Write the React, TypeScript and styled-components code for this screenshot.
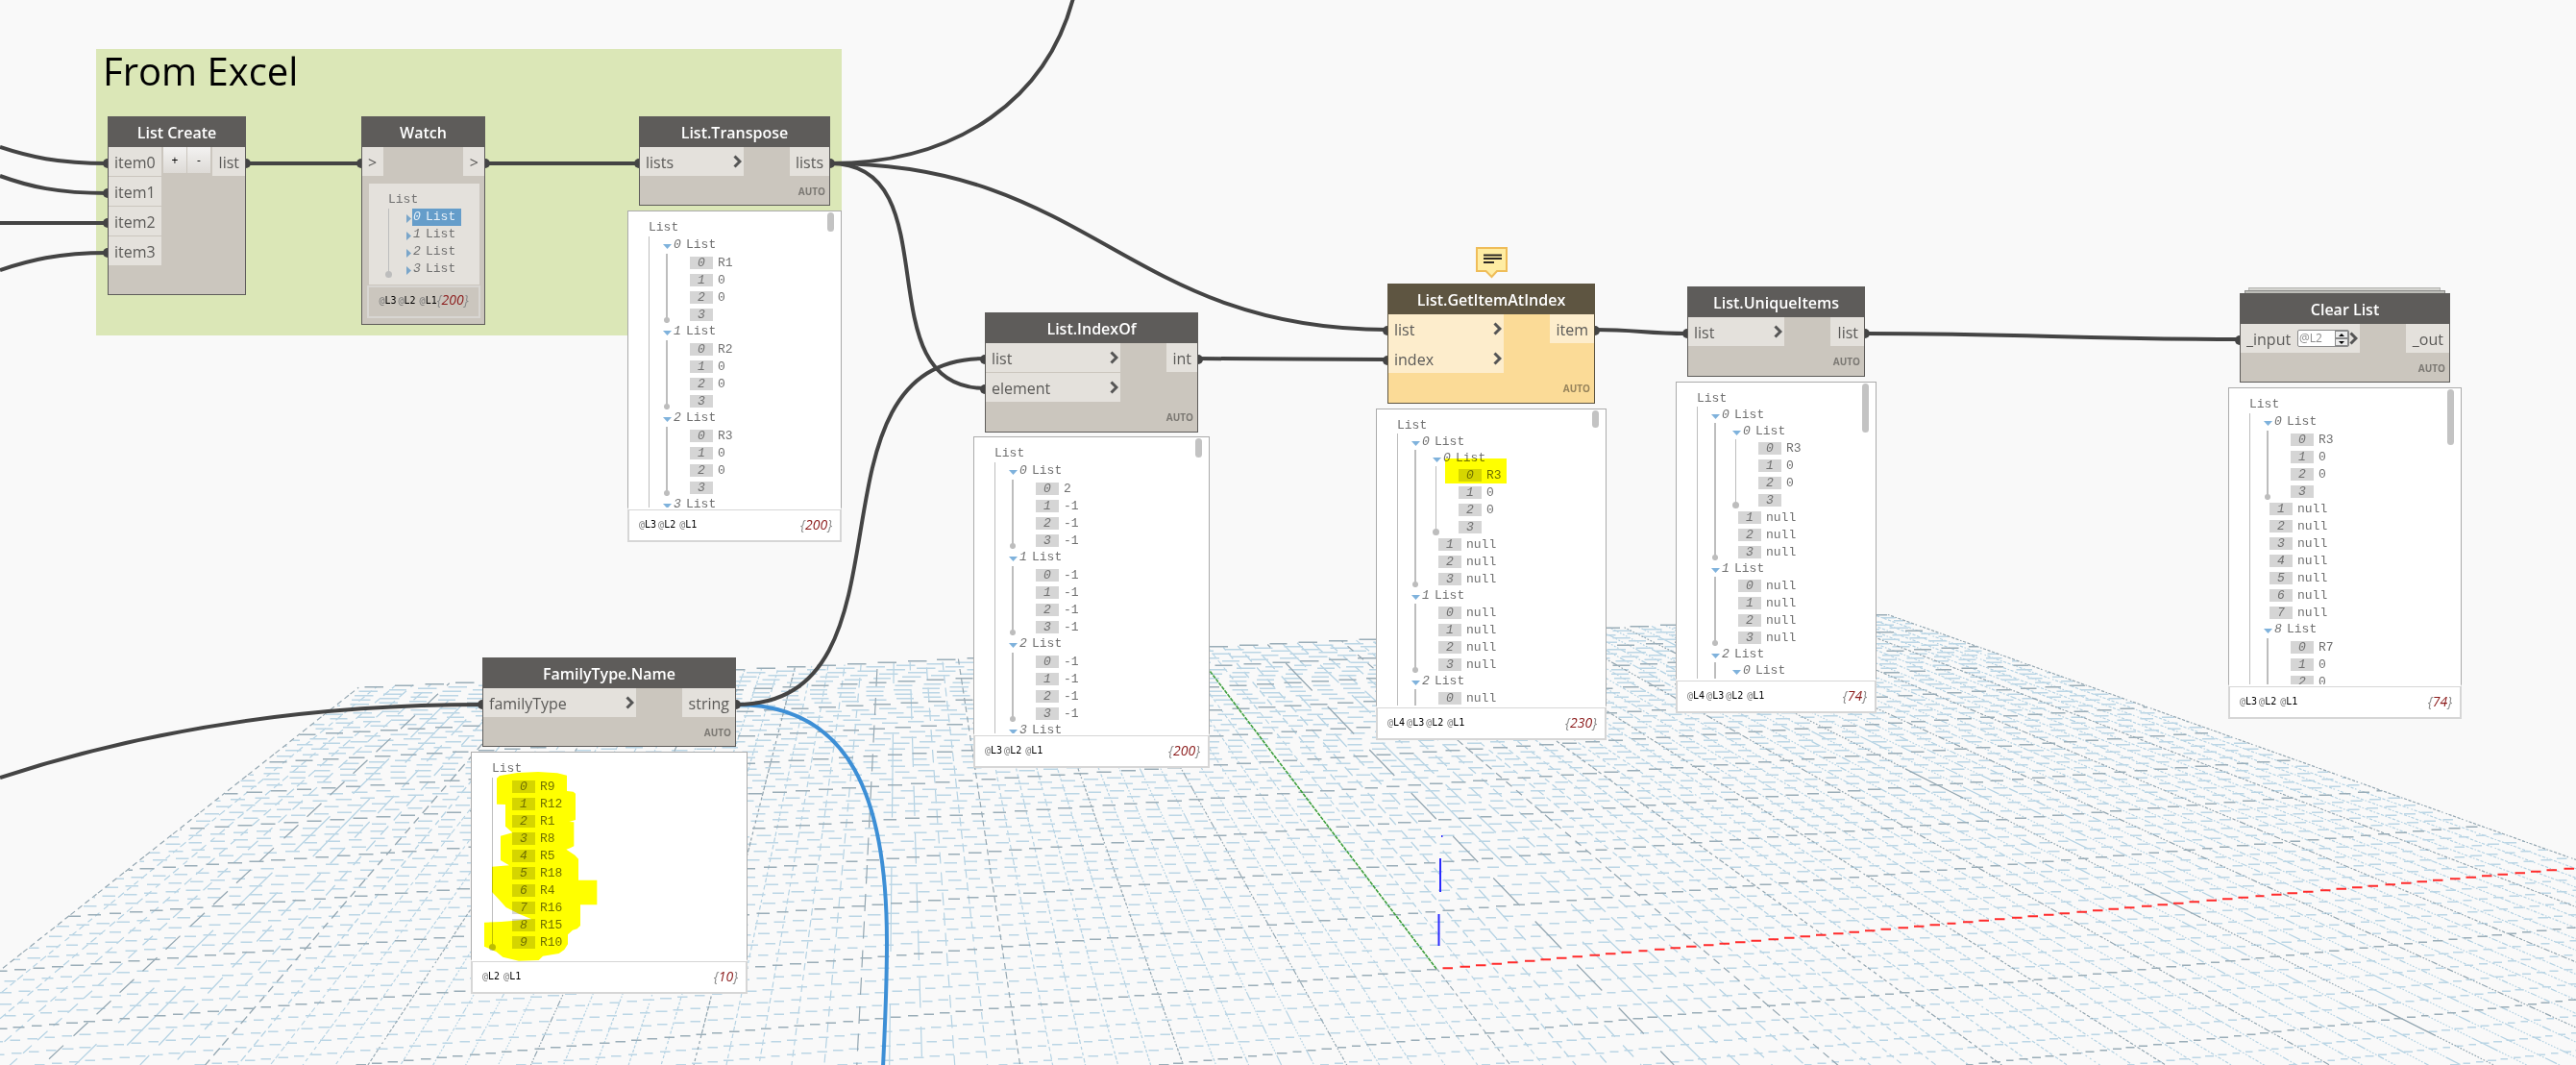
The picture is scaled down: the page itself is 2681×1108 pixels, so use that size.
import React from "react";
import styled, { createGlobalStyle, css } from "styled-components";

const GlobalStyle = createGlobalStyle`
  * { box-sizing: border-box; }
  html, body { margin: 0; background: #f9f9f9; }
  body { font-family: "Open Sans", "Noto Sans", sans-serif; }
  button, input { font: inherit; margin: 0; }
  ul { list-style: none; margin: 0; padding: 0; }
`;

/* ---------- background grid ---------- */

const PX = 1.5;
const VISIBLE = 0.62;

// Perspective projection of the ground plane on the viewport.
function project(x: number, y: number): [number, number] {
  const w = 1 + 0.0166 * x + 0.0833 * y;
  return [(165.2 * x + 77.86 * y + 1495.6) / w, (4.27 * x + 22.7 * y + 1008) / w];
}

const frac = (v: number) => v - Math.floor(v);

// Rasterises a line on a coarse pixel grid, dropping the pixels that fall
// between two rows or columns, which gives the dashes of a hairline.
function hairline(ax: number, ay: number, bx: number, by: number): string {
  const out: string[] = [];
  const dx = bx - ax;
  const dy = by - ay;
  const xMajor = Math.abs(dx) >= Math.abs(dy);
  const [s, e] = xMajor
    ? [Math.max(0, Math.min(ax, bx)), Math.min(2681, Math.max(ax, bx))]
    : [Math.max(0, Math.min(ay, by)), Math.min(1108, Math.max(ay, by))];
  const at = (m: number) =>
    xMajor ? ay + ((m - ax) * dy) / dx : ax + ((m - ay) * dx) / dy;
  const flat = xMajor && Math.abs(dy / dx) < 0.2;
  let start: number | null = null;
  let row = 0;
  const flush = (end: number) => {
    if (start === null) return;
    if (flat) {
      const y = (row * PX + 0.7).toFixed(1);
      out.push(`M${start.toFixed(1)} ${y}H${end.toFixed(1)}`);
    } else {
      const a = at(start);
      const b = at(end);
      out.push(
        xMajor
          ? `M${start.toFixed(1)} ${a.toFixed(1)}L${end.toFixed(1)} ${b.toFixed(1)}`
          : `M${a.toFixed(1)} ${start.toFixed(1)}L${b.toFixed(1)} ${end.toFixed(1)}`
      );
    }
    start = null;
  };
  for (let k = Math.ceil(s / PX); k * PX < e; k++) {
    const m = k * PX;
    const v = at(m + PX / 2) / PX;
    if (frac(v) < VISIBLE) {
      if (start !== null && flat && Math.floor(v) !== row) flush(m);
      if (start === null) {
        start = m;
        row = Math.floor(v);
      }
    } else flush(m);
  }
  flush(e);
  return out.join("");
}

const join = (x0: number, y0: number, x1: number, y1: number) => {
  const [ax, ay] = project(x0, y0);
  const [bx, by] = project(x1, y1);
  return hairline(ax, ay, bx, by);
};

const steps = Array.from({ length: 101 }, (_, i) => i - 50);
const rowsOf = (major: boolean) =>
  steps
    .filter((i) => (i % 5 === 0) === major && i >= -25)
    .map((i) => (i === 0 ? join(-10, 0, 0, 0) : join(-10, i / 5, 10, i / 5)))
    .join("");
const columnsOf = (major: boolean) =>
  steps
    .filter((i) => (i % 5 === 0) === major)
    .map((i) => (i === 0 ? join(0, 0, 0, -5) : join(i / 5, 10, i / 5, -5)))
    .join("");

const [backX, backY] = project(0, 10);

const paths = {
  minorColumns: columnsOf(false),
  minorRows: rowsOf(false),
  majorColumns: columnsOf(true),
  majorRows: rowsOf(true),
  xAxis: join(0.03, 0, 10, 0),
  yAxis: `M1495 1008L${backX.toFixed(1)} ${backY.toFixed(1)}`,
};

const Layer = styled.svg`
  position: absolute;
  inset: 0;
  width: 100%;
  height: 100%;
  overflow: visible;
  pointer-events: none;
`;

const Grid = React.memo(() => (
  <Layer aria-hidden="true" fill="none">
    <path d={paths.minorColumns} stroke="#b4d2e3" strokeWidth="1.2" />
    <path d={paths.minorRows} stroke="#bbd6e5" strokeWidth="1.6" />
    <path d={paths.majorColumns} stroke="#93a6b1" strokeWidth="1.2" />
    <path d={paths.majorRows} stroke="#9aadb8" strokeWidth="1.6" />
    <path d={paths.yAxis} stroke="#3d9f3d" strokeWidth="1.6" strokeDasharray="4 1" />
    <path d={paths.xAxis} stroke="#ff2a2a" strokeWidth="2" />
    <path d="M1499 893V928M1497.500 951V984M1500 870h1.500" stroke="#2a2aff" strokeWidth="2" />
  </Layer>
));

/* ---------- wires ---------- */

const link = (x0: number, y0: number, x1: number, y1: number) => {
  const o = Math.round(Math.hypot(x1 - x0, y1 - y0) * 0.45);
  return `M${x0} ${y0}C${x0 + o} ${y0} ${x1 - o} ${y1} ${x1} ${y1}`;
};

const wires = [
  "M0 153C30 163 60 170 112 170",
  "M0 183C30 194 60 201 112 201",
  "M0 232H112",
  "M0 281C30 271 60 263 112 263",
  link(256, 170, 376, 170),
  link(505, 170, 665, 170),
  "M864 170C1000 170 1090 100 1117 -2",
  link(864, 170, 1444, 343),
  link(864, 170, 1025, 404),
  link(766, 733, 1025, 373),
  "M0 809C150 760 320 733 502 733",
  link(1247, 373, 1444, 374),
  link(1660, 343, 1756, 347),
  link(1941, 347, 2331, 353),
];

const Wires = () => (
  <Layer aria-hidden="true" fill="none" strokeWidth="4">
    <path d="M766 733C885 733 923 830 923 980C923 1030 921 1070 919 1110" stroke="#3d8fd6" />
    {wires.map((d) => (
      <path key={d} d={d} stroke="#444" />
    ))}
  </Layer>
);

/* ---------- workspace ---------- */

const Workspace = styled.main`
  position: relative;
  min-height: 100vh;
  overflow: hidden;
  background: #f9f9f9;
`;

const Group = styled.section`
  position: absolute;
  left: 100px;
  top: 51px;
  width: 776px;
  height: 298px;
  padding: 0 7px;
  background: #dbe7b7;
`;

const GroupTitle = styled.h1`
  margin: 0;
  font-size: 40px;
  line-height: 46px;
  font-weight: 400;
  color: #000;
`;

type Tone = "plain" | "warning";
const tones = {
  plain: { head: "#5e5c5a", body: "#cbc6be", port: "#e4e1dc", auto: "#7b7873" },
  warning: { head: "#5e5541", body: "#fbdb97", port: "#fdedcc", auto: "#96835b" },
};

const Card = styled.article<{ $x: number; $y: number; $w: number; $tone: Tone }>`
  position: absolute;
  left: ${(p) => p.$x}px;
  top: ${(p) => p.$y}px;
  width: ${(p) => p.$w}px;
  border: 1px solid ${(p) => tones[p.$tone].head};
  background: ${(p) => tones[p.$tone].body};
  --port: ${(p) => tones[p.$tone].port};
  --head: ${(p) => tones[p.$tone].head};
  --auto: ${(p) => tones[p.$tone].auto};
`;

const CardTitle = styled.h2`
  margin: 0;
  height: 31px;
  background: var(--head);
  color: #fff;
  font-size: 16px;
  line-height: 32px;
  font-weight: 600;
  text-align: center;
  white-space: nowrap;
`;

const Ports = styled.div`
  display: flex;
  align-items: flex-start;
`;

const Inputs = styled.div<{ $w: number; $joined?: boolean }>`
  display: flex;
  flex-direction: column;
  gap: 1px;
  width: ${(p) => p.$w}px;
  background: ${(p) => (p.$joined ? "var(--port)" : "transparent")};
`;

const portBase = css<{ $free?: boolean }>`
  position: relative;
  display: flex;
  align-items: center;
  height: 30px;
  background: var(--port);
  color: #5a5957;
  font-size: 16px;
  line-height: 30px;
  white-space: nowrap;
  &::before {
    content: "";
    display: ${(p) => (p.$free ? "none" : "block")};
    position: absolute;
    top: 12px;
    width: 5px;
    height: 10px;
    background: #444;
  }
`;

const InPort = styled.div`
  ${portBase}
  justify-content: space-between;
  padding: 0 2px 0 6px;
  &::before {
    left: -6px;
    border-radius: 5px 0 0 5px;
  }
`;

const PortName = styled.span`
  padding-top: 2px;
`;

const OutPort = styled.div<{ $w: number }>`
  ${portBase}
  justify-content: flex-end;
  width: ${(p) => p.$w}px;
  margin-left: auto;
  padding-right: 6px;
  &::before {
    right: -6px;
    border-radius: 0 5px 5px 0;
  }
`;

const Auto = styled.div<{ $h: number }>`
  height: ${(p) => p.$h}px;
  padding-right: 4px;
  color: var(--auto);
  font-size: 10px;
  line-height: 32px;
  font-weight: 700;
  text-align: right;
`;

const Chevron = () => (
  <svg width="9" height="14" viewBox="0 0 9 14" fill="none" aria-hidden="true">
    <path d="M1.500 1.500L7 7L1.500 12.500" stroke="#555" strokeWidth="3" />
  </svg>
);

/* ---------- list create buttons ---------- */

const PortButtons = styled.div`
  display: flex;
  gap: 1px;
  margin-left: 2px;
`;

const PortButton = styled.button`
  width: 24px;
  height: 27px;
  padding: 0;
  border: 0;
  background: linear-gradient(#f3f2f1, #dddad6);
  color: #000;
  font-size: 12px;
  line-height: 24px;
`;

/* ---------- level spinner ---------- */

const Spinner = styled.div`
  display: flex;
  width: 54px;
  height: 18px;
  margin-left: auto;
  border: 1px solid #8a8a8a;
  border-radius: 2px;
  background: #fff;
`;

const LevelInput = styled.input`
  flex: 1;
  min-width: 0;
  padding: 0 1px;
  border: 0;
  background: transparent;
  color: #8b8b8b;
  font-size: 12px;
  line-height: 16px;
`;

const SpinColumn = styled.div`
  display: flex;
  flex-direction: column;
  width: 14px;
`;

const SpinButton = styled.button`
  display: flex;
  flex: 1;
  align-items: center;
  justify-content: center;
  padding: 0;
  border: 1px solid #8a8a8a;
  background: #ececec;
`;

const Caret = ({ up }: { up?: boolean }) => (
  <svg width="6" height="3" viewBox="0 0 6 3" aria-hidden="true">
    <path d={up ? "M0 3L3 0L6 3Z" : "M0 0L3 3L6 0Z"} fill="#000" />
  </svg>
);

/* ---------- data tree ---------- */

type TreeItem = {
  i?: number; v?: string; items?: TreeItem[]; closed?: boolean; selected?: boolean; more?: boolean;
};

const leaves = (...values: string[]): TreeItem[] => values.map((v, i) => ({ i, v }));
const list = (i: number, items: TreeItem[], more = false): TreeItem => ({ i, items, more });
const nulls = (from: number, to: number): TreeItem[] =>
  Array.from({ length: to - from + 1 }, (_, k) => ({ i: from + k, v: "null" }));

const Tree = styled.div<{ $list: number }>`
  --list: ${(p) => p.$list}px;
  --leaf: 18px;
  font-family: "Liberation Mono", monospace;
  font-size: 13px;
  color: #707070;
`;

const RootLabel = styled.div`
  height: var(--list);
  line-height: var(--list);
`;

const Branch = styled.ul<{ $depth: number; $more?: boolean }>`
  position: relative;
  margin-left: ${(p) => (p.$depth === 0 ? 0 : 3)}px;
  padding-left: ${(p) => (p.$depth === 0 ? 14 : 17)}px;
  padding-bottom: ${(p) => (p.$more ? 24 : 0)}px;
  border-left: ${(p) => (p.$depth === 1 ? 2 : 1)}px solid #bdbdbd;
  &::after {
    content: "";
    display: ${(p) => (p.$more ? "none" : "block")};
    position: absolute;
    left: -4px;
    bottom: 0;
    width: ${(p) => (p.$depth === 1 ? 6 : 7)}px;
    height: ${(p) => (p.$depth === 1 ? 6 : 7)}px;
    border-radius: 50%;
    background: #bdbdbd;
  }
`;

const ListRow = styled.div`
  display: flex;
  align-items: center;
  height: var(--list);
  line-height: var(--list);
`;

const Toggle = styled.button`
  display: flex;
  justify-content: flex-end;
  width: 10px;
  padding: 3px 1px 0 0;
  border: 0;
  background: none;
`;

const ListLabel = styled.span<{ $selected?: boolean }>`
  display: flex;
  gap: 5px;
  padding: 0 6px 0 1px;
  i { width: 8px; }
  ${(p) =>
    p.$selected &&
    css`
      background: #659dca;
      color: #e9f1f8;
    `}
`;

const LeafRow = styled.div`
  display: flex;
  align-items: center;
  gap: 5px;
  height: var(--leaf);
  padding-left: 6px;
`;

const Index = styled.i`
  width: 24px;
  height: 13px;
  background: #d5d5d5;
  line-height: 14px;
  text-align: center;
`;

const Arrow = ({ closed }: { closed?: boolean }) =>
  closed ? (
    <svg width="5" height="9" viewBox="0 0 5 9" aria-hidden="true">
      <path d="M0 0L5 4.500L0 9Z" fill="#7aa6ca" />
    </svg>
  ) : (
    <svg width="9" height="5" viewBox="0 0 9 5" aria-hidden="true">
      <path d="M0 0H9L4.500 5Z" fill="#7fb2dc" />
    </svg>
  );

const Items = ({ items, depth, more }: { items: TreeItem[]; depth: number; more?: boolean }) => (
  <Branch $depth={depth} $more={more}>
    {items.map((it, k) => (
      <li key={k}>
        {it.items || it.closed ? (
          <>
            <ListRow>
              <Toggle type="button" aria-label={it.closed ? "Expand" : "Collapse"}>
                <Arrow closed={it.closed} />
              </Toggle>
              <ListLabel $selected={it.selected}>
                <i>{it.i}</i>
                <span>List</span>
              </ListLabel>
            </ListRow>
            {it.items && <Items items={it.items} depth={depth + 1} more={it.more} />}
          </>
        ) : (
          <LeafRow>
            <Index>{it.i}</Index>
            <span>{it.v}</span>
          </LeafRow>
        )}
      </li>
    ))}
  </Branch>
);

const DataTree = ({ items, row = 18, more }: { items: TreeItem[]; row?: number; more?: boolean }) => (
  <Tree $list={row}>
    <RootLabel>List</RootLabel>
    <Items items={items} depth={0} more={more} />
  </Tree>
);

/* ---------- preview bubble ---------- */

const Bubble = styled.section<{ $x: number; $y: number; $w: number }>`
  position: absolute;
  left: ${(p) => p.$x}px;
  top: ${(p) => p.$y}px;
  width: ${(p) => p.$w}px;
  background: #fff;
`;

const Viewport = styled.div<{ $h: number }>`
  position: relative;
  height: ${(p) => p.$h}px;
  padding: 8px 0 0 21px;
  border: 1px solid #ababab;
  border-bottom: 2px solid #fff;
  overflow: hidden;
`;

const Thumb = styled.div<{ $h: number }>`
  position: absolute;
  top: 1px;
  right: 7px;
  width: 7px;
  height: ${(p) => p.$h}px;
  border-radius: 4px;
  background: #c3c3c3;
`;

const Levels = styled.footer`
  display: flex;
  align-items: center;
  justify-content: space-between;
  height: 34px;
  padding: 0 8px 2px 10px;
  border: 2px solid #d6d6d6;
  border-top-width: 1px;
`;

const LevelList = styled.span`
  display: flex;
  gap: 2px;
  color: #000;
  font-family: "DejaVu Sans Mono", monospace;
  font-size: 10px;
  span:last-child:not(:first-child) { margin-left: 2px; }
  b { font-weight: 400; color: #777; }
`;

const Count = styled.em`
  color: #8b1a1a;
  font-size: 14px;
  line-height: 20px;
  b { font-weight: 400; color: #888; }
`;

const LevelNames = ({ n }: { n: number }) => (
  <LevelList>
    {Array.from({ length: n }, (_, k) => (
      <span key={k}>
        <b>@</b>L{n - k}
      </span>
    ))}
  </LevelList>
);

const Total = ({ n }: { n: number }) => (
  <Count>
    <b>{"{"}</b>
    {n}
    <b>{"}"}</b>
  </Count>
);

type PreviewProps = {
  x: number; y: number; w: number; h: number; thumb?: number;
  levels: number; count: number; items: TreeItem[]; row?: number;
};

const Preview = ({ x, y, w, h, thumb, levels, count, items, row }: PreviewProps) => (
  <Bubble $x={x} $y={y} $w={w}>
    <Viewport $h={h}>
      <DataTree items={items} row={row} more={thumb !== undefined} />
      {thumb && <Thumb $h={thumb} />}
    </Viewport>
    <Levels>
      <LevelNames n={levels} />
      <Total n={count} />
    </Levels>
  </Bubble>
);

/* ---------- nodes ---------- */

type NodeProps = {
  x: number; y: number; w: number; title: string; inputs: string[]; inW: number;
  out: string; outW: number; tone?: Tone; joined?: boolean; foot?: number; spinner?: boolean; free?: boolean;
};

const FunctionNode = ({
  x, y, w, title, inputs, inW, out, outW, tone = "plain", joined, foot = 30, spinner, free,
}: NodeProps) => (
  <Card $x={x} $y={y} $w={w} $tone={tone}>
    <CardTitle>{title}</CardTitle>
    <Ports>
      <Inputs $w={inW} $joined={joined}>
        {inputs.map((name) => (
          <InPort key={name}>
            <PortName>{name}</PortName>
            {spinner && (
              <Spinner>
                <LevelInput defaultValue="@L2" aria-label="List level" />
                <SpinColumn>
                  <SpinButton type="button" aria-label="Level up"><Caret up /></SpinButton>
                  <SpinButton type="button" aria-label="Level down"><Caret /></SpinButton>
                </SpinColumn>
              </Spinner>
            )}
            <Chevron />
          </InPort>
        ))}
      </Inputs>
      <OutPort $w={outW} $free={free}>
        <PortName>{out}</PortName>
      </OutPort>
    </Ports>
    <Auto $h={foot}>AUTO</Auto>
  </Card>
);

const CreateFoot = styled.div`
  height: 30px;
`;

const WatchPanel = styled.div`
  height: 105px;
  margin: 8px 5px 0 7px;
  padding: 8px 0 0 20px;
  background: #e4e1dc;
`;

const WatchFoot = styled.div`
  display: flex;
  align-items: center;
  justify-content: center;
  height: 34px;
  margin: 1px 4px 6px 5px;
  padding-bottom: 4px;
  border: 2px solid #d8d6d2;
`;

const StackBack = styled.div`
  position: absolute;
  left: 2340px;
  top: 299px;
  width: 200px;
  height: 8px;
  border: 1px solid #b5b5b2;
  background: #d4d4d0;
`;

const StackMiddle = styled(StackBack)`
  left: 2336px;
  top: 302px;
  width: 209px;
  border-color: #8b8b88;
  background: #bdbdb8;
`;

const Note = styled.svg`
  position: absolute;
  left: 1536px;
  top: 257px;
`;

const HighlightBox = styled.div`
  position: absolute;
  left: 1504px;
  top: 477px;
  width: 64px;
  height: 26px;
  background: #ff0;
  mix-blend-mode: multiply;
`;

const HighlightStroke = styled.svg`
  position: absolute;
  left: 504px;
  top: 803px;
  mix-blend-mode: multiply;
`;

const minusOnes = () => leaves("-1", "-1", "-1", "-1");

export default function App() {
  return (
    <>
      <GlobalStyle />
      <Workspace>
        <Grid />
        <Group>
          <GroupTitle>From Excel</GroupTitle>
        </Group>
        <Wires />

        <Card $x={112} $y={121} $w={144} $tone="plain">
          <CardTitle>List Create</CardTitle>
          <Ports>
            <Inputs $w={55}>
              {["item0", "item1", "item2", "item3"].map((n) => (
                <InPort key={n}>
                  <PortName>{n}</PortName>
                </InPort>
              ))}
            </Inputs>
            <PortButtons>
              <PortButton type="button">+</PortButton>
              <PortButton type="button">-</PortButton>
            </PortButtons>
            <OutPort $w={34}>
              <PortName>list</PortName>
            </OutPort>
          </Ports>
          <CreateFoot />
        </Card>

        <Card $x={376} $y={121} $w={129} $tone="plain">
          <CardTitle>Watch</CardTitle>
          <Ports>
            <Inputs $w={22}>
              <InPort>
                <PortName>&gt;</PortName>
              </InPort>
            </Inputs>
            <OutPort $w={22}>
              <PortName>&gt;</PortName>
            </OutPort>
          </Ports>
          <WatchPanel>
            <DataTree
              items={[0, 1, 2, 3].map((i) => ({ i, closed: true, selected: i === 0 }))}
            />
          </WatchPanel>
          <WatchFoot>
            <LevelNames n={3} />
            <Total n={200} />
          </WatchFoot>
        </Card>

        <FunctionNode x={665} y={121} w={199} title="List.Transpose" inputs={["lists"]} inW={108} out="lists" outW={41} />
        <Preview
          x={653} y={219} w={223} h={311} thumb={20} levels={3} count={200}
          items={[...["R1", "R2", "R3"].map((r, i) => list(i, leaves(r, "0", "0", ""))), list(3, [], true)]}
        />

        <FunctionNode x={1025} y={325} w={222} title="List.IndexOf" inputs={["list", "element"]} inW={140} out="int" outW={32} foot={31} />
        <Preview
          x={1013} y={454} w={246} h={311} thumb={20} levels={3} count={200}
          items={[
            list(0, leaves("2", "-1", "-1", "-1")),
            list(1, minusOnes()),
            list(2, minusOnes()),
            list(3, [], true),
          ]}
        />

        <FunctionNode
          x={1444} y={295} w={216} title="List.GetItemAtIndex" tone="warning" joined
          inputs={["list", "index"]} inW={120} out="item" outW={46} foot={31}
        />
        <Preview
          x={1432} y={425} w={240} h={311} thumb={18} levels={4} count={230} row={17}
          items={[
            list(0, [list(0, leaves("R3", "0", "0", "")), ...nulls(1, 3)]),
            list(1, nulls(0, 3)),
            list(2, nulls(0, 0), true),
          ]}
        />
        <Note width="33" height="33" viewBox="0 0 33 33" role="img" aria-label="Warning note">
          <path d="M1 1H32V25H22L16.500 31L10.500 25H1Z" fill="#ffeda3" stroke="#efbd59" strokeWidth="2" />
          <path d="M8 8.500H27M8 12H27M8 16H19" stroke="#2c2823" strokeWidth="2" />
        </Note>

        <FunctionNode x={1756} y={298} w={185} title="List.UniqueItems" inputs={["list"]} inW={100} out="list" outW={35} foot={31} />
        <Preview
          x={1744} y={397} w={209} h={311} thumb={51} levels={4} count={74} row={17}
          items={[
            list(0, [list(0, leaves("R3", "0", "0", "")), ...nulls(1, 3)]),
            list(1, nulls(0, 3)),
            list(2, [list(0, [], true)], true),
          ]}
        />

        <StackBack />
        <StackMiddle />
        <FunctionNode x={2331} y={305} w={219} title="Clear List" inputs={["_input"]} inW={124} out="_out" outW={45} spinner free />
        <Preview
          x={2319} y={403} w={243} h={311} thumb={58} levels={3} count={74}
          items={[
            list(0, leaves("R3", "0", "0", "")),
            ...nulls(1, 7),
            list(8, leaves("R7", "0", "0"), true),
          ]}
        />

        <FunctionNode x={502} y={684} w={264} title="FamilyType.Name" inputs={["familyType"]} inW={159} out="string" outW={55} />
        <Preview
          x={490} y={782} w={288} h={218} levels={2} count={10}
          items={leaves("R9", "R12", "R1", "R8", "R5", "R18", "R4", "R16", "R15", "R10")}
        />

        <HighlightBox />
        <HighlightStroke width="118" height="197" viewBox="72 400 354 591" aria-hidden="true">
          <path
            fill="#ff0"
            d="M111 420L120 412L175 403L240 400L300 404L330 411V460L350 462L357 468V550L337 556L352 557V632L340 638L328 642L355 660L366 672V738H424V815H372V880L362 890L348 894L333 908V938L322 955L305 967L255 975L242 988L180 990L130 978L110 962L72 945V870L125 868L220 860L180 843L140 823L115 795L96 775V696L150 692L123 676V600L160 590L138 570V502L111 501Z"
          />
        </HighlightStroke>
      </Workspace>
    </>
  );
}
